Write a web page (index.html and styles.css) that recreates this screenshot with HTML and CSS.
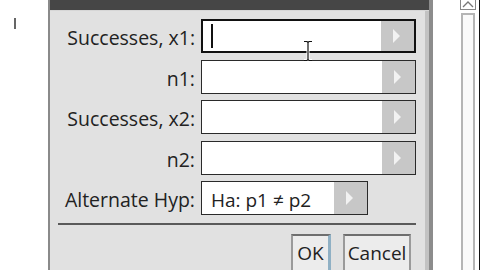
FILE: index.html
```html
<html>
<head>
<title>2-Prop z Test</title>
<link rel="stylesheet" href="styles.css">
</head>
<body>

<div class="screen">
  <div class="doc-left"><span class="doc-caret"></span></div>

  <div class="dialog">
    <div class="titlebar"></div>
    <div class="dialog-body">
      <div class="form">
        <label>Successes, x1:</label>
        <div class="field focused"><span class="value"><span class="caret"></span></span><span class="arrow"></span></div>

        <label>n1:</label>
        <div class="field"><span class="value"></span><span class="arrow"></span></div>

        <label>Successes, x2:</label>
        <div class="field"><span class="value"></span><span class="arrow"></span></div>

        <label>n2:</label>
        <div class="field"><span class="value"></span><span class="arrow"></span></div>

        <label>Alternate Hyp:</label>
        <div class="field short"><span class="value">Ha: p1 &ne; p2</span><span class="arrow"></span></div>
      </div>

      <hr class="sep">

      <div class="buttons">
        <button class="btn default">OK</button>
        <button class="btn">Cancel</button>
      </div>
    </div>

    <!-- mouse pointer over the first field -->
    <svg class="ibeam" width="14" height="22" viewBox="0 0 14 22">
      <path d="M3 1.5h3l1 1 1-1h3M7 2.5v17M3 20.5h3l1-1 1 1h3" fill="none" stroke="#fff" stroke-width="3"/>
      <path d="M3 1.5h3l1 1 1-1h3M7 2.5v17M3 20.5h3l1-1 1 1h3" fill="none" stroke="#111" stroke-width="1.2"/>
    </svg>
  </div>

  <div class="doc-right">
    <div class="scrollbar">
      <div class="scroll-up"><svg width="14" height="9" viewBox="0 0 14 9"><path d="M2 7l5-5 5 5" fill="none" stroke="#777" stroke-width="1.3"/></svg></div>
      <div class="scroll-track"></div>
    </div>
    <div class="edge"></div>
  </div>
</div>

</body>
</html>
```

FILE: styles.css
```css
html, body {
  margin: 0;
  height: 100%;
  overflow: hidden;
  background: #fff;
  font-family: "Open Sans", "DejaVu Sans", sans-serif;
  color: #222;
}

.screen {
  display: flex;
  height: 270px;
}

.doc-left {
  width: 48px;
  background: #fff;
  padding: 18px 0 0 14px;
  box-sizing: border-box;
}

.doc-caret {
  display: block;
  width: 2px;
  height: 11px;
  background: #666;
}

.dialog {
  position: relative;
  width: 379px;
  border-left: 2px solid #8a8a8a;
  border-right: 4px solid #8c8c8c;
  background: #e1e1e1;
  box-shadow: inset -4px 0 0 #c2c2c2;
  display: flex;
  flex-direction: column;
}

.titlebar {
  flex-shrink: 0;
  height: 10px;
  background: #464646;
  border-bottom: 1px solid #d6d6d6;
}

.dialog-body {
  flex-shrink: 0;
  padding: 8px 13px 0 0;
}

.form {
  display: grid;
  grid-template-columns: 145px 215px;
  column-gap: 6px;
  row-gap: 6.5px;
  align-items: center;
}

.form label {
  text-align: right;
  font-size: 19.5px;
  padding-top: 3px;
  white-space: nowrap;
}

.field {
  height: 34px;
  box-sizing: border-box;
  border: 1px solid #2a2a2a;
  background: #fff;
  display: flex;
}

.field.focused {
  border: 2px solid #111;
}

.field.short {
  width: 167px;
}

.field .value {
  flex: 1;
  display: flex;
  align-items: center;
  padding: 3px 0 0 9px;
  font-size: 19px;
  white-space: nowrap;
}

.field.focused .value {
  padding: 0 0 0 8px;
}

.caret {
  display: block;
  width: 1.5px;
  height: 24px;
  background: #111;
}

.arrow {
  width: 33px;
  background: #c7c7c7;
  display: flex;
  align-items: center;
  justify-content: center;
}

.arrow::before {
  content: "";
  border-left: 7px solid #f2f2f2;
  border-top: 7px solid transparent;
  border-bottom: 7px solid transparent;
  margin-right: 2px;
}

.sep {
  margin: 8px 0 0 8px;
  border: none;
  height: 2px;
  background: #5a5a5a;
}

.buttons {
  display: flex;
  justify-content: flex-end;
  gap: 12px;
  margin-top: 9px;
  padding-right: 5px;
}

.btn {
  height: 42px;
  width: 68px;
  padding: 0 0 4px;
  font-family: inherit;
  font-size: 19px;
  color: #222;
  background: #ececec;
  border: 2px solid #9a9a9a;
  border-top-color: #6e6e6e;
  border-radius: 0;
}

.btn.default {
  width: 40px;
  border-right: 3px solid #8fb0c4;
}

.ibeam {
  position: absolute;
  left: 251px;
  top: 40px;
}

.doc-right {
  flex: 1;
  display: flex;
  justify-content: flex-end;
  background: #fff;
}

.scrollbar {
  width: 16px;
  margin-right: 3px;
  display: flex;
  flex-direction: column;
}

.scroll-up {
  height: 10px;
  border: 1px solid #888;
  border-top: none;
  box-sizing: border-box;
  display: flex;
  justify-content: center;
  align-items: flex-end;
  overflow: hidden;
}

.scroll-track {
  flex: 1;
  margin: 3px 1px 0;
  border: 2px solid #b5b5b5;
  border-bottom: none;
  background: #fafafa;
}

.edge {
  width: 1px;
  background: #111;
}
```
